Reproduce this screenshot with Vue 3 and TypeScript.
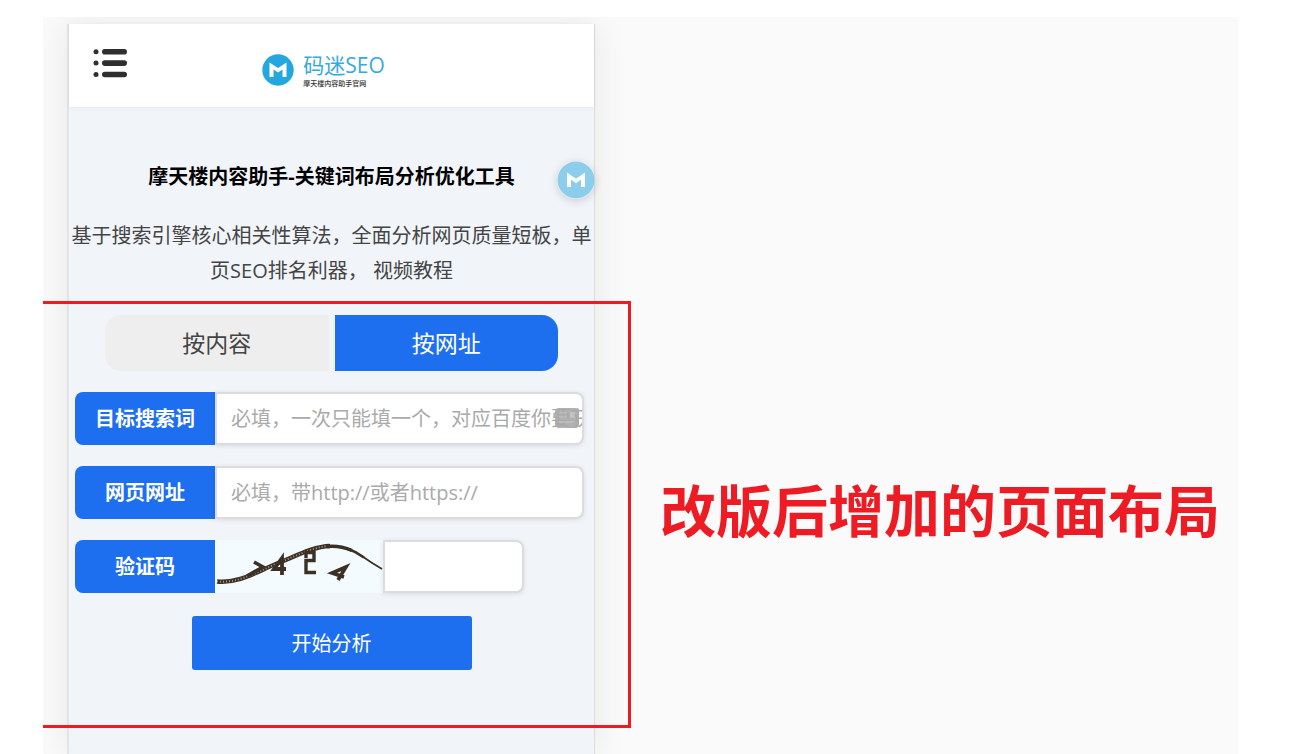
<script setup lang="ts">
import { ref } from 'vue'

type Mode = 'content' | 'url'

const tabs: { id: Mode; label: string }[] = [
  { id: 'content', label: '按内容' },
  { id: 'url', label: '按网址' },
]
const active = ref<Mode>('url')
const keyword = ref('')
const address = ref('')
const code = ref('')
</script>

<template>
  <main class="canvas">
    <div class="stage">
      <div class="phone">
        <header class="bar">
          <button class="menu" type="button" aria-label="菜单">
            <svg viewBox="0 0 34 30" width="34" height="30">
              <g fill="#2f2f2f">
                <circle cx="3" cy="3.700" r="2.500" />
                <circle cx="3" cy="15" r="2.500" />
                <circle cx="3" cy="26.500" r="2.500" />
                <rect x="9" y="1" width="25" height="5.600" rx="2.800" />
                <rect x="9" y="12.300" width="25" height="5.600" rx="2.800" />
                <rect x="9" y="23.700" width="25" height="5.600" rx="2.800" />
              </g>
            </svg>
          </button>
          <a class="brand" href="#">
            <svg viewBox="0 0 32 32" width="32" height="32" aria-hidden="true">
              <circle cx="16" cy="16" r="15.700" fill="#24a6de" />
              <path d="M7.500 23V8.500l8.500 5.500 8.500-5.500V23h-4v-7.500L16 18.500l-4.500-3V23z" fill="#fff" />
            </svg>
            <span class="words">
              <span class="name">码迷SEO</span>
              <span class="sub">摩天楼内容助手官网</span>
            </span>
          </a>
        </header>

        <div class="body">
          <button class="float" type="button" aria-label="助手">
            <svg viewBox="0 0 38 38" width="38" height="38">
              <circle cx="19" cy="19" r="18.500" fill="#8bcdea" />
              <path d="M10 26V11.500l9 6.300 9-6.300V26h-4v-7.500l-5 3.700-5-3.700V26z" fill="#fff" />
            </svg>
          </button>

          <h1>摩天楼内容助手-关键词布局分析优化工具</h1>
          <p class="intro">基于搜索引擎核心相关性算法，全面分析网页质量短板，单页SEO排名利器， 视频教程</p>

          <form class="form" @submit.prevent>
            <div class="tabs">
              <button
                v-for="t in tabs"
                :key="t.id"
                type="button"
                :class="{ on: active === t.id }"
                :aria-pressed="active === t.id"
                @click="active = t.id"
              >{{ t.label }}</button>
            </div>

            <div class="row">
              <label for="keyword">目标搜索词</label>
              <div class="field">
                <input id="keyword" v-model="keyword" type="text" placeholder="必填，一次只能填一个，对应百度你要获取" />
                <svg class="card" viewBox="0 0 24 20" width="24" height="20" aria-hidden="true">
                  <rect x="0" y="0" width="24" height="20" rx="4" fill="#a9a9a9" />
                  <path d="M4 5h8M4 9h8M4 14h16" stroke="#bdbdbd" stroke-width="1.500" />
                  <rect x="15" y="4" width="5" height="6" fill="#bdbdbd" />
                </svg>
              </div>
            </div>

            <div class="row">
              <label for="address">网页网址</label>
              <div class="field">
                <input id="address" v-model="address" type="text" placeholder="必填，带http://或者https://" />
              </div>
            </div>

            <div class="row">
              <label for="code">验证码</label>
              <svg class="captcha" viewBox="0 0 168 53" role="img" aria-label="验证码图片">
                <rect width="168" height="53" fill="#f3fbff" />
                <g fill="none" stroke="#3c2f24">
                  <path d="M2 41.500c22 2 38-9 60-18 18-7 36-17 53-17.500" stroke-width="4.400" />
                  <path d="M2 41.500c22 2 38-9 60-18 18-7 36-17 53-17.500" stroke="#a79d92" stroke-width="2" stroke-dasharray="1 2" />
                  <path d="M112 6.500q12-1.500 25 4" stroke-width="3.400" />
                  <path d="M132 8.500q9 3 17 9" stroke-width="2.400" />
                  <path d="M146 15.500q10 7 21 13.500" stroke-width="1.700" />
                  <path d="M39 22l9 5-16 9" stroke-width="3.600" />
                  <path d="M67 35V18l-8 11h12" stroke-width="3.800" />
                  <path d="M91 18V12.500h8v8h-8v12h10" stroke-width="3.400" />
                  <path d="M123 40l8-13-14 6 12 4" stroke-width="3.600" />
                </g>
              </svg>
              <div class="field short">
                <input id="code" v-model="code" type="text" />
              </div>
            </div>

            <button class="submit" type="submit">开始分析</button>
            <div class="mark" aria-hidden="true"></div>
          </form>
        </div>
      </div>
    </div>
    <p class="caption">改版后增加的页面布局</p>
  </main>
</template>

<style>
body {
  background: #fff;
}
</style>

<style scoped>
* {
  box-sizing: border-box;
}
.canvas {
  display: grid;
  grid-template-columns: 588fr 607fr;
  margin: 0 60px 0 43px;
  min-height: 100vh;
  border-top: 17px solid #fff;
  overflow: hidden;
  background: #fafafa;
  font-family: "Open Sans", "Noto Sans CJK SC", sans-serif;
}
button,
input {
  font: inherit;
  border: 0;
  padding: 0;
  margin: 0;
}
button {
  cursor: pointer;
}
.stage {
  display: flex;
  padding: 7px 36px 0 24px;
}
.phone {
  display: flex;
  flex-direction: column;
  flex: 1;
  min-width: 0;
  background: #f1f5fa;
  border-left: 2px solid #e4e4e5;
  border-right: 1px solid #dcdddf;
  box-shadow: 0 0 32px rgba(0, 0, 0, 0.08);
}
.bar {
  display: grid;
  grid-template-columns: 1fr auto 1fr;
  height: 83px;
  padding: 24px 24px 0;
  background: #fff;
  box-shadow: 0 1px 4px rgba(0, 0, 0, 0.05);
}
.menu {
  width: 34px;
  height: 30px;
  background: none;
}
.menu svg,
.float svg {
  display: block;
}
.brand {
  display: flex;
  gap: 9px;
  align-items: center;
  height: 44px;
  margin-right: 16px;
  color: #35aae0;
  text-decoration: none;
  white-space: nowrap;
}
.words {
  display: flex;
  flex-direction: column;
}
.name {
  font-size: 21px;
  line-height: 28px;
}
.sub {
  color: #333;
  font-size: 7px;
  font-weight: 500;
  line-height: 10px;
}
.body {
  position: relative;
  flex: 1;
  padding-top: 55px;
}
.float {
  position: absolute;
  top: 54px;
  right: -1px;
  width: 38px;
  height: 38px;
  border-radius: 50%;
  background: none;
  box-shadow: 0 2px 8px rgba(0, 0, 0, 0.16);
}
h1 {
  margin: 0 0 26px;
  font-size: 20px;
  font-weight: 700;
  line-height: 30px;
  text-align: center;
  color: #000;
}
.intro {
  margin: 0;
  font-size: 20px;
  line-height: 35px;
  text-align: center;
  color: #444;
}
.form {
  position: relative;
  display: flex;
  flex-direction: column;
  gap: 21px;
  margin-top: 13px;
  padding: 14px 10px 58px 6px;
}
.mark {
  position: absolute;
  inset: 0 -37px 0 -26px;
  border: 3px solid #ed1c24;
  border-left: 0;
  pointer-events: none;
}
.tabs {
  display: grid;
  grid-template-columns: 1fr 1fr;
  gap: 6px;
  height: 56px;
  margin: 0 26px 0 30px;
}
.tabs button {
  padding-bottom: 2px;
  font-size: 23px;
  color: #444;
  background: #eee;
}
.tabs button:first-child {
  border-radius: 16px 0 0 16px;
}
.tabs button:last-child {
  border-radius: 0 16px 16px 0;
}
.tabs button.on {
  color: #fff;
  background: #1e6fef;
}
.row {
  display: flex;
  height: 53px;
}
.row label {
  width: 140px;
  flex: none;
  border-radius: 8px 0 0 8px;
  background: #1e6fef;
  color: #fff;
  font-size: 20px;
  font-weight: 700;
  line-height: 53px;
  text-align: center;
}
.field {
  position: relative;
  flex: 1;
  min-width: 0;
}
.field.short {
  flex: 0 1 141px;
}
.field input {
  display: block;
  width: 100%;
  height: 53px;
  padding: 0 0 0 14px;
  border: 2px solid #dcdcdd;
  border-radius: 0 8px 8px 0;
  background: #fff;
  box-shadow: 0 1px 5px rgba(0, 0, 0, 0.1);
  color: #444;
  font-size: 20px;
}
.field input::placeholder {
  color: #aaa;
  opacity: 1;
}
.card {
  position: absolute;
  top: 16px;
  right: 5px;
  opacity: 0.9;
}
.captcha {
  width: 168px;
  height: 53px;
  flex: none;
}
.submit {
  align-self: center;
  width: 280px;
  height: 54px;
  margin: 2px 0 0 4px;
  padding-bottom: 2px;
  border-radius: 3px;
  background: #1e6fef;
  color: #fff;
  font-size: 20px;
}
.caption {
  align-self: start;
  margin: 453px 0 0;
  padding-left: 29px;
  color: #ed1c24;
  font-size: 56px;
  font-weight: 700;
  line-height: 80px;
  white-space: nowrap;
}
</style>
